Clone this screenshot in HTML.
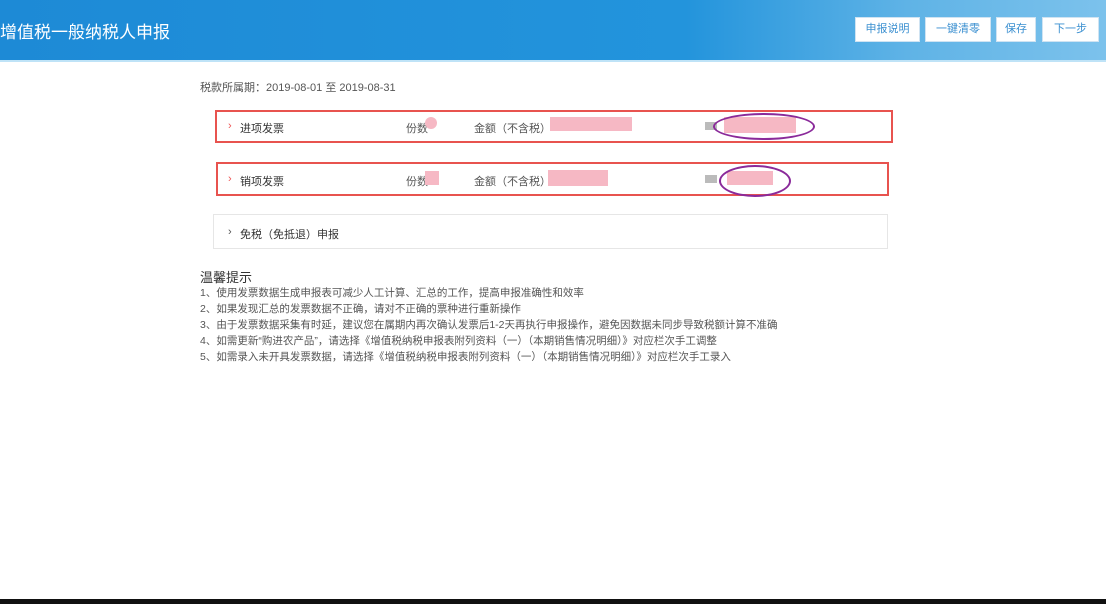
<!DOCTYPE html>
<html><head><meta charset="utf-8"><style>
body{margin:0;width:1106px;height:604px;overflow:hidden;background:#fff;font-family:"Liberation Sans","Noto Sans CJK SC",sans-serif;position:relative;color:#555}
.hdr{position:absolute;left:0;top:0;width:1106px;height:60px;background:linear-gradient(90deg,#1d8ad6 0%,#2394dc 62%,#5fb3e6 82%,#7cc2ec 100%)}
.hdr .t{position:absolute;left:0;top:18px;color:#fff;font-size:17px}
.line{position:absolute;left:0;top:60px;width:1106px;height:2px;background:#bfe3f7}
.btn{position:absolute;top:17px;height:23px;background:#fff;border:1px solid #cfe3f2;color:#3a8fd0;font-size:11px;line-height:23px;text-align:center}
.a{position:absolute;font-size:11px;color:#555;white-space:nowrap}
.h{font-size:10.5px}
.box{position:absolute;box-sizing:border-box;background:#fff}
.r{border:2px solid #e8534f}
.pk{position:absolute;background:#f6b8c4}
.ov{position:absolute;border:2px solid #8a2a9a;border-radius:50%}
.gr{position:absolute;background:#bbb;width:12px;height:8px}
.bot{position:absolute;left:0;top:599px;width:1106px;height:5px;background:#111}
</style></head><body>
<div class="hdr"><div class="t">增值税一般纳税人申报</div></div>
<div class="line"></div>
<div class="btn" style="left:855px;width:63px">申报说明</div>
<div class="btn" style="left:925px;width:64px">一键清零</div>
<div class="btn" style="left:996px;width:38px">保存</div>
<div class="btn" style="left:1042px;width:55px">下一步</div>
<div class="a" style="left:200px;top:79px">税款所属期：2019-08-01 至 2019-08-31</div>

<div class="box r" style="left:215px;top:110px;width:678px;height:33px"></div>
<div class="a" style="left:228px;top:120px;color:#e55">›</div>
<div class="a" style="left:240px;top:120px;color:#333">进项发票</div>
<div class="a" style="left:406px;top:120px">份数</div><div class="pk" style="left:425px;top:117px;width:12px;height:12px;border-radius:6px"></div>
<div class="a" style="left:474px;top:120px">金额（不含税）</div><div class="pk" style="left:550px;top:117px;width:82px;height:14px"></div>
<div class="gr" style="left:705px;top:122px"></div><div class="pk" style="left:724px;top:117px;width:72px;height:16px"></div>
<div class="ov" style="left:713px;top:113px;width:98px;height:23px"></div>

<div class="box r" style="left:216px;top:162px;width:673px;height:34px"></div>
<div class="a" style="left:228px;top:173px;color:#e55">›</div>
<div class="a" style="left:240px;top:173px;color:#333">销项发票</div>
<div class="a" style="left:406px;top:173px">份数</div><div class="pk" style="left:425px;top:171px;width:14px;height:14px"></div>
<div class="a" style="left:474px;top:173px">金额（不含税）</div><div class="pk" style="left:548px;top:170px;width:60px;height:16px"></div>
<div class="gr" style="left:705px;top:175px"></div><div class="pk" style="left:727px;top:171px;width:46px;height:14px"></div>
<div class="ov" style="left:719px;top:165px;width:68px;height:28px"></div>

<div class="box" style="left:213px;top:214px;width:675px;height:35px;border:1px solid #e6e6e6"></div>
<div class="a" style="left:228px;top:226px">›</div>
<div class="a" style="left:240px;top:226px;color:#333">免税（免抵退）申报</div>

<div class="a" style="left:200px;top:267px;font-size:13px;color:#333">温馨提示</div>
<div class="a h" style="left:200px;top:285px">1、使用发票数据生成申报表可减少人工计算、汇总的工作，提高申报准确性和效率</div>
<div class="a h" style="left:200px;top:301px">2、如果发现汇总的发票数据不正确，请对不正确的票种进行重新操作</div>
<div class="a h" style="left:200px;top:317px">3、由于发票数据采集有时延，建议您在属期内再次确认发票后1-2天再执行申报操作，避免因数据未同步导致税额计算不准确</div>
<div class="a h" style="left:200px;top:333px">4、如需更新“购进农产品”，请选择《增值税纳税申报表附列资料（一）（本期销售情况明细）》对应栏次手工调整</div>
<div class="a h" style="left:200px;top:349px">5、如需录入未开具发票数据，请选择《增值税纳税申报表附列资料（一）（本期销售情况明细）》对应栏次手工录入</div>
<div class="bot"></div>
</body></html>
